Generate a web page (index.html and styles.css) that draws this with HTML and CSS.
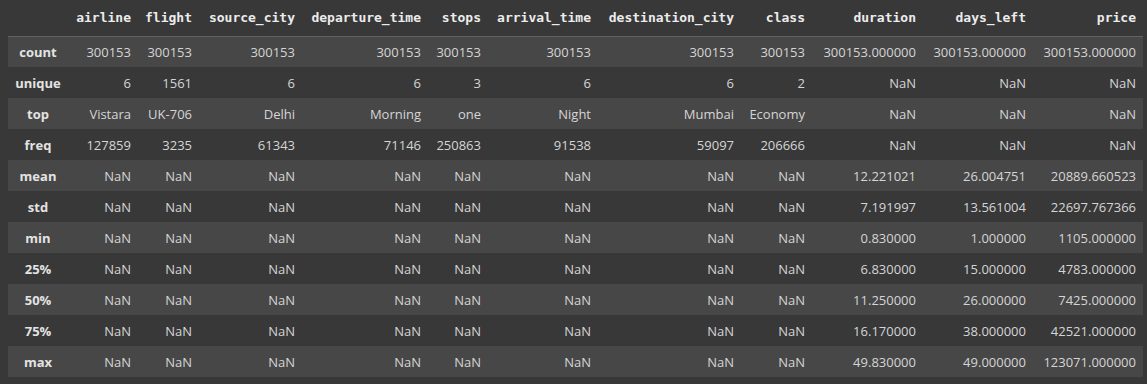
FILE: index.html
```html
<!DOCTYPE html>
<html lang="en">
<head>
    <meta charset="UTF-8">
    <title>describe()</title>
    <link rel="stylesheet" href="styles.css">
</head>
<body>
    <div class="output">
        <table class="dataframe">
            <colgroup>
                <col style="width:60px">
                <col style="width:70px">
                <col style="width:61px">
                <col style="width:103px">
                <col style="width:126px">
                <col style="width:60px">
                <col style="width:110px">
                <col style="width:143px">
                <col style="width:71px">
                <col style="width:111px">
                <col style="width:110px">
                <col style="width:110px">
            </colgroup>
            <thead>
                <tr>
                    <th></th>
                    <th>airline</th>
                    <th>flight</th>
                    <th>source_city</th>
                    <th>departure_time</th>
                    <th>stops</th>
                    <th>arrival_time</th>
                    <th>destination_city</th>
                    <th>class</th>
                    <th>duration</th>
                    <th>days_left</th>
                    <th>price</th>
                </tr>
            </thead>
            <tbody>
                <tr>
                    <th>count</th>
                    <td>300153</td><td>300153</td><td>300153</td><td>300153</td><td>300153</td><td>300153</td><td>300153</td><td>300153</td>
                    <td>300153.000000</td><td>300153.000000</td><td>300153.000000</td>
                </tr>
                <tr>
                    <th>unique</th>
                    <td>6</td><td>1561</td><td>6</td><td>6</td><td>3</td><td>6</td><td>6</td><td>2</td>
                    <td>NaN</td><td>NaN</td><td>NaN</td>
                </tr>
                <tr>
                    <th>top</th>
                    <td>Vistara</td><td>UK-706</td><td>Delhi</td><td>Morning</td><td>one</td><td>Night</td><td>Mumbai</td><td>Economy</td>
                    <td>NaN</td><td>NaN</td><td>NaN</td>
                </tr>
                <tr>
                    <th>freq</th>
                    <td>127859</td><td>3235</td><td>61343</td><td>71146</td><td>250863</td><td>91538</td><td>59097</td><td>206666</td>
                    <td>NaN</td><td>NaN</td><td>NaN</td>
                </tr>
                <tr>
                    <th>mean</th>
                    <td>NaN</td><td>NaN</td><td>NaN</td><td>NaN</td><td>NaN</td><td>NaN</td><td>NaN</td><td>NaN</td>
                    <td>12.221021</td><td>26.004751</td><td>20889.660523</td>
                </tr>
                <tr>
                    <th>std</th>
                    <td>NaN</td><td>NaN</td><td>NaN</td><td>NaN</td><td>NaN</td><td>NaN</td><td>NaN</td><td>NaN</td>
                    <td>7.191997</td><td>13.561004</td><td>22697.767366</td>
                </tr>
                <tr>
                    <th>min</th>
                    <td>NaN</td><td>NaN</td><td>NaN</td><td>NaN</td><td>NaN</td><td>NaN</td><td>NaN</td><td>NaN</td>
                    <td>0.830000</td><td>1.000000</td><td>1105.000000</td>
                </tr>
                <tr>
                    <th>25%</th>
                    <td>NaN</td><td>NaN</td><td>NaN</td><td>NaN</td><td>NaN</td><td>NaN</td><td>NaN</td><td>NaN</td>
                    <td>6.830000</td><td>15.000000</td><td>4783.000000</td>
                </tr>
                <tr>
                    <th>50%</th>
                    <td>NaN</td><td>NaN</td><td>NaN</td><td>NaN</td><td>NaN</td><td>NaN</td><td>NaN</td><td>NaN</td>
                    <td>11.250000</td><td>26.000000</td><td>7425.000000</td>
                </tr>
                <tr>
                    <th>75%</th>
                    <td>NaN</td><td>NaN</td><td>NaN</td><td>NaN</td><td>NaN</td><td>NaN</td><td>NaN</td><td>NaN</td>
                    <td>16.170000</td><td>38.000000</td><td>42521.000000</td>
                </tr>
                <tr>
                    <th>max</th>
                    <td>NaN</td><td>NaN</td><td>NaN</td><td>NaN</td><td>NaN</td><td>NaN</td><td>NaN</td><td>NaN</td>
                    <td>49.830000</td><td>49.000000</td><td>123071.000000</td>
                </tr>
            </tbody>
        </table>
    </div>
</body>
</html>
```

FILE: styles.css
```css
body {
    margin: 0;
    background-color: #383838;
    color: #d5d5d5;
    font-family: 'Open Sans', sans-serif;
    font-size: 13px;
}

.output {
    padding: 0 0 0 8px;
}

.dataframe {
    border-collapse: collapse;
    border-spacing: 0;
    table-layout: fixed;
    width: 1135px;
}

.dataframe thead th {
    height: 36px;
    padding: 0 7px 0 0;
    text-align: right;
    vertical-align: middle;
    font-family: 'DejaVu Sans Mono', monospace;
    font-weight: bold;
    font-size: 13px;
    color: #ececec;
    border-bottom: 1px solid #616161;
    box-sizing: border-box;
}

.dataframe tbody tr {
    height: 31px;
}

.dataframe tbody tr:nth-child(odd) {
    background-color: #474747;
}

.dataframe tbody th {
    text-align: center;
    font-weight: bold;
    color: #e3e3e3;
    padding: 0;
}

.dataframe td {
    text-align: right;
    padding: 0 7px 0 0;
    white-space: nowrap;
}
```
